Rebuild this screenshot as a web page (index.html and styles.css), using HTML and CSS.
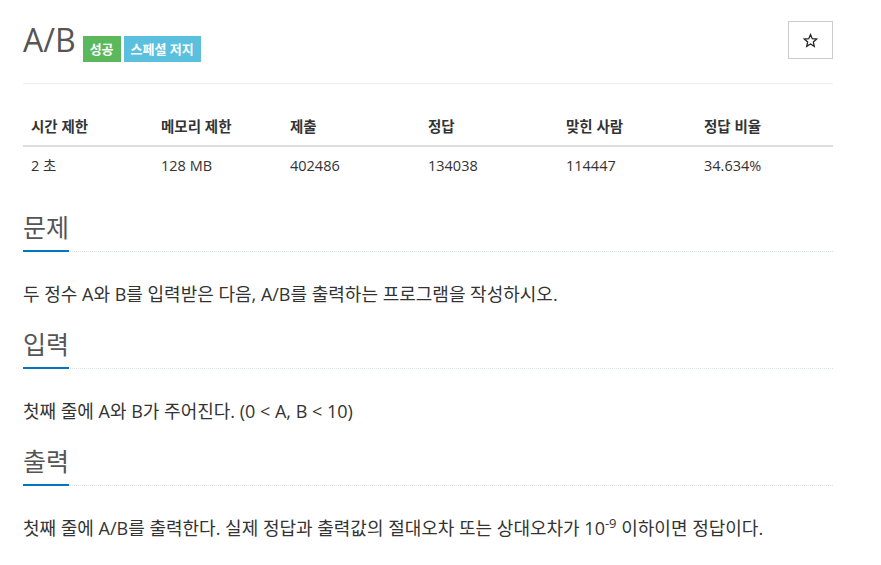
FILE: index.html
```html
<!DOCTYPE html>
<html lang="ko">
<head>
    <meta charset="UTF-8">
    <title>A/B</title>
    <link rel="stylesheet" href="styles.css">
</head>
<body>
    <div class="page">
        <div class="page-header">
            <div class="title-row">
                <h1 class="problem-title">A/B</h1>
                <span class="label label-success">성공</span>
                <span class="label label-info">스페셜 저지</span>
            </div>
            <button class="star-btn">
                <svg width="15" height="15" viewBox="0 0 24 24"><path d="M12 2.5l2.8 6.6 7.1.6-5.4 4.7 1.6 7-6.1-3.7-6.1 3.7 1.6-7-5.4-4.7 7.1-.6z" fill="none" stroke="#222" stroke-width="2" stroke-linejoin="miter"/></svg>
            </button>
        </div>

        <table class="info">
            <thead>
                <tr>
                    <th>시간 제한</th>
                    <th>메모리 제한</th>
                    <th>제출</th>
                    <th>정답</th>
                    <th>맞힌 사람</th>
                    <th>정답 비율</th>
                </tr>
            </thead>
            <tbody>
                <tr>
                    <td>2 초</td>
                    <td>128 MB</td>
                    <td>402486</td>
                    <td>134038</td>
                    <td>114447</td>
                    <td>34.634%</td>
                </tr>
            </tbody>
        </table>

        <!-- 문제 -->
        <section class="problem-section">
            <div class="headline"><h2>문제</h2></div>
            <p class="problem-text">두 정수 A와 B를 입력받은 다음, A/B를 출력하는 프로그램을 작성하시오.</p>
        </section>

        <!-- 입력 -->
        <section class="problem-section">
            <div class="headline"><h2>입력</h2></div>
            <p class="problem-text">첫째 줄에 A와 B가 주어진다. (0 &lt; A, B &lt; 10)</p>
        </section>

        <!-- 출력 -->
        <section class="problem-section">
            <div class="headline"><h2>출력</h2></div>
            <p class="problem-text">첫째 줄에 A/B를 출력한다. 실제 정답과 출력값의 절대오차 또는 상대오차가 10<sup>-9</sup> 이하이면 정답이다.</p>
        </section>
    </div>
</body>
</html>
```

FILE: styles.css
```css
body { margin: 0; font-family: "Open Sans", "Noto Sans CJK KR", sans-serif; color: #333; background: #fff; }
.page { width: 810px; padding-left: 23px; }

.page-header { display: flex; justify-content: space-between; align-items: flex-start; padding: 20px 0 21px; border-bottom: 1px solid #eee; }
.title-row { display: flex; align-items: flex-start; }
.problem-title { margin: 0 7px 0 0; font-size: 32px; line-height: 40px; font-weight: normal; color: #555; }
.label { margin: 16px 3px 0 0; padding: 0 7px; height: 26px; line-height: 26px; font-size: 13px; font-weight: bold; color: #fff; }
.label-success { background: #5cb85c; }
.label-info { background: #5bc0de; }
.star-btn { display: flex; align-items: center; justify-content: center; margin-top: 1px; width: 45px; height: 38px; padding: 0; border: 1px solid #ccc; background: #fff; }

.info { width: 810px; margin: 25px 0 28px; border-collapse: collapse; table-layout: fixed; font-size: 14.5px; line-height: 20px; }
.info th { padding: 8px; text-align: left; font-weight: bold; border-bottom: 2px solid #ddd; }
.info td { padding: 9px 8px 8px; text-align: left; }
.info th:nth-child(1) { width: 114px; }
.info th:nth-child(2) { width: 113px; }
.info th:nth-child(3) { width: 122px; }
.info th:nth-child(4) { width: 122px; }
.info th:nth-child(5) { width: 122px; }

.headline { display: flex; border-bottom: 1px dotted #dde3ea; }
.headline h2 { margin: 0 0 -1px; padding-bottom: 8px; border-bottom: 2px solid #0076c0; font-size: 25px; line-height: 30px; font-weight: normal; color: #555; }
.problem-text { margin: 27px 0 20px; font-size: 18px; line-height: 30px; }
.problem-text sup { font-size: 13px; line-height: 0; vertical-align: 7px; }
```
